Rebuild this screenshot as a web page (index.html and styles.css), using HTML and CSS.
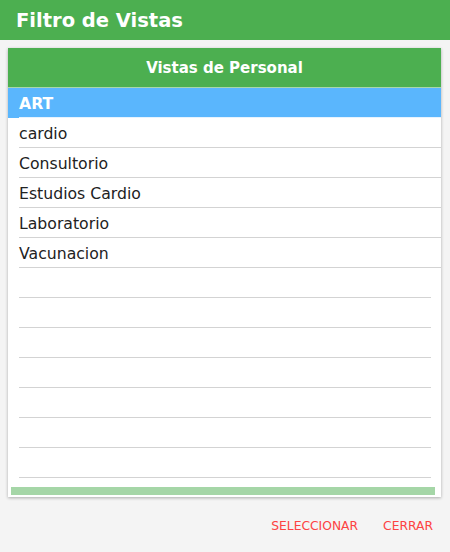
FILE: index.html
```html
<!DOCTYPE html>
<html lang="es">
<head>
<meta charset="utf-8">
<title>Filtro de Vistas</title>
<link rel="stylesheet" href="styles.css">
</head>
<body>
<header class="topbar"><h1 class="title">Filtro de Vistas</h1></header>
<main class="content">
  <section class="card">
    <div class="card-head">Vistas de Personal</div>
    <ul class="list">
      <li class="item selected">ART</li>
      <li class="item">cardio</li>
      <li class="item">Consultorio</li>
      <li class="item">Estudios Cardio</li>
      <li class="item">Laboratorio</li>
      <li class="item">Vacunacion</li>
      <li class="item empty"></li>
      <li class="item empty"></li>
      <li class="item empty"></li>
      <li class="item empty"></li>
      <li class="item empty"></li>
      <li class="item empty"></li>
      <li class="item empty"></li>
    </ul>
    <div class="scroll"><div class="scroll-bar"></div></div>
  </section>
</main>
<footer class="actions">
  <button class="btn">SELECCIONAR</button>
  <button class="btn">CERRAR</button>
</footer>
</body>
</html>
```
FILE: styles.css
```css
* { box-sizing: border-box; }
html, body {
  margin: 0;
  padding: 0;
  background: #f4f4f4;
  font-family: "DejaVu Sans", Verdana, sans-serif;
  height: 100%;
}
.topbar {
  background: #4caf50;
  height: 40px;
  display: flex;
  align-items: center;
  padding-left: 16px;
}
.title {
  margin: 0;
  color: #fff;
  font-size: 19.5px;
  font-weight: bold;
  line-height: 1;
  padding-top: 2px;
}
.content {
  padding: 8px 8px 0 8px;
}
.card {
  width: 433px;
  background: #fff;
  box-shadow: 0 1px 3px rgba(0,0,0,0.3);
}
.card-head {
  background: #4caf50;
  color: #fff;
  font-weight: bold;
  font-size: 15px;
  height: 40px;
  display: flex;
  align-items: center;
  justify-content: center;
  border-bottom: 1px solid #a9d7ab;
  padding-top: 1px;
}
.list {
  list-style: none;
  margin: 0;
  padding: 0;
}
.item {
  height: 30px;
  line-height: 29px;
  padding: 1px 0 0 11px;
  font-size: 15.7px;
  color: #222;
  background: linear-gradient(#d3d3d3, #d3d3d3) no-repeat 11px 100% / calc(100% - 11px) 1px;
}
.item.selected {
  background: linear-gradient(#e6f3fe, #e6f3fe) no-repeat 11px 100% / calc(100% - 11px) 1px, #5ab6fd;
  color: #fff;
  font-weight: bold;
}
.item.empty {
  background: linear-gradient(#d3d3d3, #d3d3d3) no-repeat 11px 100% / calc(100% - 21px) 1px;
}
.scroll {
  padding: 9px 6px 2px 3px;
}
.scroll-bar {
  height: 8px;
  background: #a5d6a7;
}
.actions {
  display: flex;
  justify-content: flex-end;
  align-items: center;
  gap: 9px;
  height: 55px;
  padding: 3px 9px 0 0;
}
.btn {
  background: none;
  border: 0;
  padding: 0 8px;
  color: #fd4343;
  font-family: "DejaVu Sans", Verdana, sans-serif;
  font-size: 12.3px;
}
```
